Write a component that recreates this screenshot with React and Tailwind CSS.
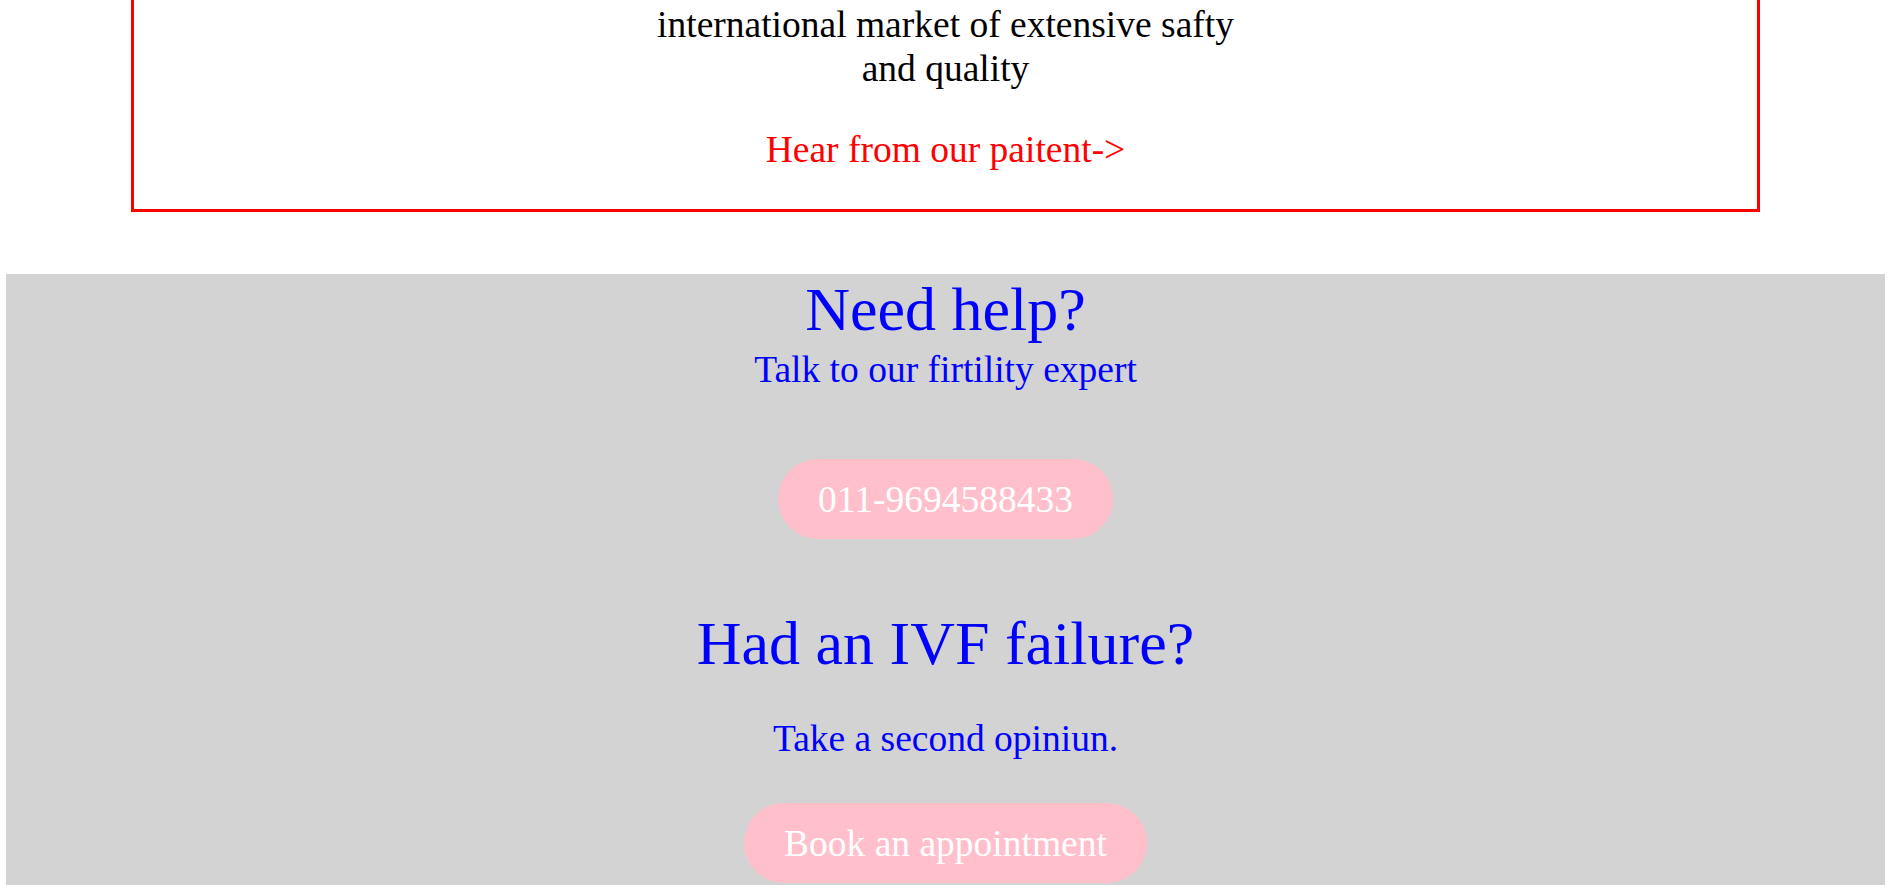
export default function App() {
  const serif = { fontFamily: '"Liberation Serif", "Times New Roman", serif' };
  return (
    <div className="h-[885px] w-full overflow-hidden bg-white pl-[6px] pr-[3px]" style={serif}>
      <div className="mx-[125px] -mt-[40px] border-[3px] border-[#ff0000] pt-[40px] pb-[37px] text-center">
        <p className="text-[37.5px] leading-[44px] text-black">
          international market of extensive safty
          <br />
          and quality
        </p>
        <p className="mt-[37px] text-[37.5px] leading-[44px] text-[#ff0000]">Hear from our paitent-&gt;</p>
      </div>

      <section className="mt-[62px] flex flex-col items-center bg-[#d3d3d3] pb-[40px] text-center">
        <h1 className="text-[62px] leading-[71px] font-normal text-[#0000ff]">Need help?</h1>
        <p className="mt-[3px] text-[37.5px] leading-[44px] text-[#0000ff]">Talk to our firtility expert</p>
        <button className="mt-[67px] box-border h-[80px] rounded-[40px] bg-[#ffc0cb] px-[40px] pt-[19px] text-[37.5px] leading-[44px] text-white flex items-start">
          011-9694588433
        </button>
        <h2 className="mt-[69px] text-[62px] leading-[71px] font-normal text-[#0000ff]">Had an IVF failure?</h2>
        <p className="mt-[38px] text-[37.5px] leading-[44px] text-[#0000ff]">Take a second opiniun.</p>
        <button className="mt-[42px] box-border h-[80px] rounded-[40px] bg-[#ffc0cb] px-[40px] pt-[19px] text-[37.5px] leading-[44px] text-white flex items-start">
          Book an appointment
        </button>
      </section>
    </div>
  );
}
